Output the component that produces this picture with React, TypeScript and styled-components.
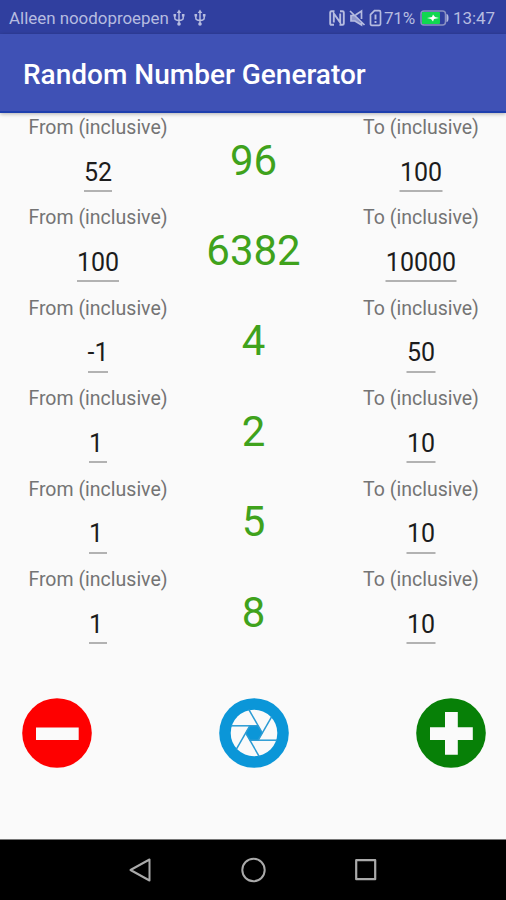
import React from "react";
import styled, { createGlobalStyle } from "styled-components";

const GlobalStyle = createGlobalStyle`
  * { box-sizing: border-box; }
  body { margin: 0; background: #fafafa; font-family: Roboto, sans-serif; }
`;

const Screen = styled.div`
  display: flex;
  flex-direction: column;
  width: 506px;
  height: 900px;
  overflow: hidden;
  background: #fafafa;
`;

const StatusBar = styled.header`
  display: flex;
  align-items: center;
  justify-content: space-between;
  flex: none;
  height: 34px;
  padding: 2px 11px 0 9px;
  background: #303f9f;
  color: #b6bce0;
  font-size: 16.9px;
`;

const StatusGroup = styled.div`
  display: flex;
  align-items: center;
`;

const Carrier = styled.span`
  width: 163px;
  white-space: nowrap;
`;

const Percent = styled.span`
  width: 34px;
  margin: 0 2px 0 2px;
  font-size: 17px;
  letter-spacing: -0.2px;
`;

const Clock = styled.span`
  width: 42px;
  margin-left: 4px;
  font-size: 17px;
  letter-spacing: -0.1px;
  white-space: nowrap;
`;

const StatusIcon = styled.svg<{ $gap: number }>`
  flex: none;
  margin-left: ${(p) => p.$gap}px;
`;

const AppBar = styled.div`
  display: flex;
  align-items: center;
  flex: none;
  height: 79px;
  padding: 3px 23px 0;
  background: #3f51b5;
  border-bottom: 2px solid #1e3fae;
  box-shadow: 0 1px 4px rgba(0, 0, 0, 0.3);
`;

const Title = styled.h1`
  margin: 0;
  color: #fff;
  font-size: 28px;
  font-weight: 500;
  white-space: nowrap;
`;

const List = styled.main`
  flex: none;
  height: 562px;
  padding-top: 0.6px;
`;

const Row = styled.section`
  display: grid;
  grid-template-columns: 196px 115px 195px;
  height: 90.45px;
`;

const Field = styled.div<{ $shift: number }>`
  display: flex;
  flex-direction: column;
  align-items: center;
  transform: translateX(${(p) => p.$shift}px);
`;

const Label = styled.span`
  margin-top: 2.4px;
  height: 24px;
  line-height: 24px;
  color: #747474;
  font-size: 19.5px;
  white-space: nowrap;
`;

const Value = styled.span`
  min-width: 18px;
  height: 39.4px;
  margin-top: 12.6px;
  border-bottom: 2px solid #b2b2b2;
  color: #1c1c1c;
  font-size: 25px;
  line-height: 40px;
`;

const Result = styled.output`
  display: flex;
  justify-content: center;
  height: 96px;
  color: #3fa21c;
  font-size: 42px;
  line-height: 94px;
`;

const Actions = styled.div`
  display: flex;
  justify-content: space-between;
  flex: none;
  height: 164px;
  padding: 23px 20px 0 22px;
`;

const RoundButton = styled.button`
  display: block;
  width: 70px;
  height: 70px;
  padding: 0;
  border: 0;
  background: none;
`;

const NavBar = styled.nav`
  display: flex;
  justify-content: center;
  align-items: center;
  gap: 87px;
  flex: none;
  height: 61px;
  border-top: 1px solid #777;
  background: #000;
`;

const Usb = ({ gap }: { gap: number }) => (
  <StatusIcon $gap={gap} width="12" height="18" viewBox="0 0 12 18" fill="none" stroke="currentColor" strokeWidth="1.5">
    <path d="M6 2v13M1.8 6v3c0 2 1.5 2.4 4.2 2.4s4.2-.4 4.2-2.4V6" />
    <path d="M6 .5 8.3 4H3.7zM.5 5h2.6v2.6H.5zM8.9 5h2.6v2.6H8.9z" fill="currentColor" stroke="none" />
    <circle cx="6" cy="15" r="1.8" fill="currentColor" stroke="none" />
  </StatusIcon>
);

const Nfc = () => (
  <StatusIcon $gap={0} width="16" height="18" viewBox="0 0 16 18" fill="none" stroke="currentColor" strokeWidth="1.9">
    <path d="M4.8 13.5V4.5l6.4 9V4.5" />
    <path d="M5 15.8H2.5Q1.2 15.8 1.2 14.5V3.5Q1.2 2.2 2.5 2.2H5.5M11 2.2h2.5q1.3 0 1.3 1.3v11q0 1.3-1.3 1.3h-3" />
  </StatusIcon>
);

const Muted = () => (
  <StatusIcon $gap={4} width="17" height="18" viewBox="0 0 17 18" fill="none" stroke="currentColor" strokeWidth="1.7">
    <path d="m1 2 14.5 14M6.5 6l6-4v8M5 6.5H2V12h4l6.5 4v-2.5" />
    <path d="M2 7h4l6 7v2l-6-4H2z" fill="currentColor" fillOpacity=".7" stroke="none" />
  </StatusIcon>
);

const SimAlert = () => (
  <StatusIcon $gap={3} width="13" height="18" viewBox="0 0 13 18" fill="none" stroke="currentColor" strokeWidth="1.7">
    <path d="M5.5 1.7h4.7q1.3 0 1.3 1.3v12q0 1.3-1.3 1.3H2.8q-1.3 0-1.3-1.3V5.7z" />
    <path d="M6.5 5.5v5M6.5 12v2" strokeWidth="1.9" />
  </StatusIcon>
);

const Battery = () => (
  <StatusIcon $gap={0} width="29" height="16" viewBox="0 0 29 16">
    <rect x="1" y="1" width="24.5" height="14" rx="3" fill="none" stroke="#8a91c2" strokeWidth="1.5" />
    <rect x="2" y="2" width="18" height="12" rx="1" fill="#10d750" />
    <path d="M26.5 4q2 0 2 4t-2 4z" fill="#b6bce0" />
    <path d="m7 8 5-1 1-2.5L15 7l4 1-5 1-1 2.5L11 9z" fill="#fff" />
  </StatusIcon>
);

const Minus = () => (
  <svg width="70" height="70" viewBox="0 0 70 70">
    <circle cx="35" cy="35" r="34.8" fill="#fe0000" />
    <rect x="14" y="29.5" width="42.7" height="12.5" fill="#fafafa" />
  </svg>
);

const Plus = () => (
  <svg width="70" height="70" viewBox="0 0 70 70">
    <circle cx="35" cy="35" r="34.8" fill="#078007" />
    <path d="M29 14h12.8v15.2h15V42h-15v14.8H29V42H14V29.2h15z" fill="#fafafa" />
  </svg>
);

const bladeAngles = [0, 60, 120, 180, 240, 300];

const Shutter = () => (
  <svg width="70" height="70" viewBox="-35 -35 70 70">
    <circle r="34.8" fill="#0b96d8" />
    <circle r="23.3" fill="#fafafa" />
    <path d="M-4.3-7.5H4.3L8.7 0 4.3 7.5h-8.6L-8.7 0z" fill="#0b96d8" />
    {bladeAngles.map((angle) => (
      <path key={angle} d="M4.3-7.2H-23" stroke="#2b9bd4" strokeWidth="1.5" transform={`rotate(${angle})`} />
    ))}
  </svg>
);

const ranges = [
  { from: "52", result: "96", to: "100" },
  { from: "100", result: "6382", to: "10000" },
  { from: "-1", result: "4", to: "50" },
  { from: "1", result: "2", to: "10" },
  { from: "1", result: "5", to: "10" },
  { from: "1", result: "8", to: "10" },
];

export default function App() {
  return (
    <Screen>
      <GlobalStyle />
      <StatusBar>
        <StatusGroup>
          <Carrier>Alleen noodoproepen</Carrier>
          <Usb gap={1} />
          <Usb gap={9} />
        </StatusGroup>
        <StatusGroup>
          <Nfc />
          <Muted />
          <SimAlert />
          <Percent>71%</Percent>
          <Battery />
          <Clock>13:47</Clock>
        </StatusGroup>
      </StatusBar>
      <AppBar>
        <Title>Random Number Generator</Title>
      </AppBar>
      <List>
        {ranges.map((range, index) => (
          <Row key={index}>
            <Field $shift={0}>
              <Label>From (inclusive)</Label>
              <Value>{range.from}</Value>
            </Field>
            <Result>{range.result}</Result>
            <Field $shift={12.5}>
              <Label>To (inclusive)</Label>
              <Value>{range.to}</Value>
            </Field>
          </Row>
        ))}
      </List>
      <Actions>
        <RoundButton aria-label="Remove range"><Minus /></RoundButton>
        <RoundButton aria-label="Generate"><Shutter /></RoundButton>
        <RoundButton aria-label="Add range"><Plus /></RoundButton>
      </Actions>
      <NavBar>
        <svg width="26" height="26" viewBox="0 0 26 26" fill="none" stroke="#aaa" strokeWidth="2" strokeLinejoin="round">
          <path d="M3.5 13 22.5 2.5v21z" />
        </svg>
        <svg width="26" height="26" viewBox="0 0 26 26" fill="none" stroke="#aaa" strokeWidth="2">
          <circle cx="13.5" cy="13" r="11.2" />
        </svg>
        <svg width="26" height="26" viewBox="0 0 26 26" fill="none" stroke="#aaa" strokeWidth="2.2" strokeLinejoin="round">
          <rect x="3.2" y="3.2" width="19" height="19" />
        </svg>
      </NavBar>
    </Screen>
  );
}
